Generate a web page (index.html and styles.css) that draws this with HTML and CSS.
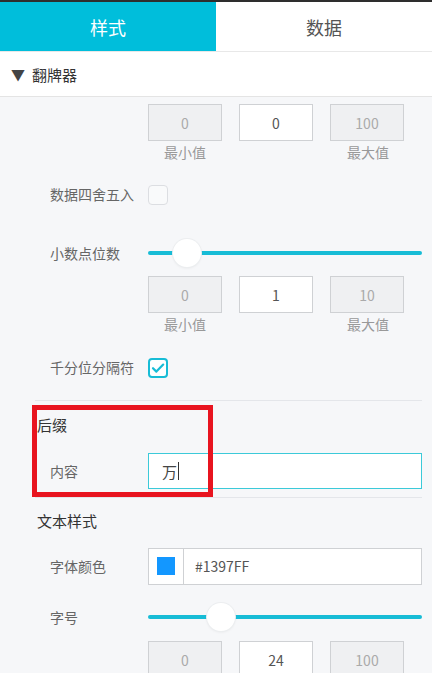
FILE: index.html
```html
<!DOCTYPE html>
<html lang="zh-CN">
<head>
    <meta charset="UTF-8">
    <meta name="viewport" content="width=device-width, initial-scale=1.0">
    <title>翻牌器 样式</title>
    <link rel="stylesheet" href="styles.css">
</head>
<body>
    <div class="tabs">
        <div class="tab active">样式</div>
        <div class="tab">数据</div>
    </div>

    <div class="section-head"><span class="arrow">▼</span> 翻牌器</div>

    <div class="panel">
        <div class="group first">
            <div class="row range">
                <div class="label"></div>
                <div class="field">
                    <div class="nums">
                        <div class="num off">0</div>
                        <div class="num">0</div>
                        <div class="num off">100</div>
                    </div>
                    <div class="num-labels"><span>最小值</span><span>最大值</span></div>
                </div>
            </div>
            <div class="row">
                <div class="label">数据四舍五入</div>
                <div class="field"><span class="check"></span></div>
            </div>
            <div class="row">
                <div class="label">小数点位数</div>
                <div class="field">
                    <div class="slider"><span class="thumb" style="--p: 0.1"></span></div>
                </div>
            </div>
            <div class="row range">
                <div class="label"></div>
                <div class="field">
                    <div class="nums">
                        <div class="num off">0</div>
                        <div class="num">1</div>
                        <div class="num off">10</div>
                    </div>
                    <div class="num-labels second"><span>最小值</span><span>最大值</span></div>
                </div>
            </div>
            <div class="row">
                <div class="label">千分位分隔符</div>
                <div class="field">
                    <span class="check on">
                        <svg viewBox="0 0 20 20" width="20" height="20"><path d="M5 10.2l3.4 3.4L15.2 6.6" fill="none" stroke="#17bcd6" stroke-width="2.2" stroke-linecap="round" stroke-linejoin="round"/></svg>
                    </span>
                </div>
            </div>
        </div>

        <div class="group suffix">
            <div class="group-title">后缀</div>
            <div class="row">
                <div class="label">内容</div>
                <div class="field">
                    <div class="text-input focus">万<span class="caret"></span></div>
                </div>
            </div>
            <div class="marker"></div>
        </div>

        <div class="group text-style">
            <div class="group-title">文本样式</div>
            <div class="row">
                <div class="label">字体颜色</div>
                <div class="field">
                    <div class="color-input">
                        <span class="swatch-box"><span class="swatch"></span></span>
                        <span class="hex">#1397FF</span>
                    </div>
                </div>
            </div>
            <div class="row">
                <div class="label">字号</div>
                <div class="field">
                    <div class="slider"><span class="thumb" style="--p: 0.24"></span></div>
                </div>
            </div>
            <div class="row range">
                <div class="label"></div>
                <div class="field">
                    <div class="nums">
                        <div class="num off">0</div>
                        <div class="num">24</div>
                        <div class="num off">100</div>
                    </div>
                </div>
            </div>
        </div>
    </div>
</body>
</html>
```

FILE: styles.css
```css
* {
    box-sizing: border-box;
}
body {
    margin: 0;
    width: 432px;
    height: 673px;
    overflow: hidden;
    background-color: #f6f7f9;
    font-family: "Noto Sans CJK SC", "Noto Sans", sans-serif;
    color: #666;
    font-size: 14px;
}
.tabs {
    display: flex;
    height: 51px;
    border-top: 2px solid #2e2e2e;
    background-color: #fff;
}
.tab {
    flex: 1;
    display: flex;
    align-items: center;
    justify-content: center;
    font-size: 18px;
    color: #555;
}
.tab.active {
    background-color: #00bedb;
    color: #fff;
}
.section-head {
    height: 46px;
    display: flex;
    align-items: center;
    padding-left: 11px;
    background-color: #fff;
    border-top: 1px solid #e8e8e8;
    border-bottom: 1px solid #e4e4e4;
    font-size: 15px;
    color: #333;
}
.arrow {
    font-size: 14px;
    color: #444;
    margin-right: 7px;
}
.panel {
    padding: 0 10px 0 35px;
}
.group {
    border-top: 1px solid #e4e6ea;
    position: relative;
}
.group.first {
    border-top: none;
    padding-top: 7px;
    padding-bottom: 13px;
}
.group-title {
    height: 46px;
    display: flex;
    align-items: center;
    padding-left: 2px;
    font-size: 15px;
    color: #333;
}
.row {
    display: flex;
    align-items: center;
    min-height: 40px;
}
.row.range {
    align-items: flex-start;
}
.label {
    width: 113px;
    padding-left: 15px;
}
.field {
    flex: 1;
}
.nums {
    display: flex;
    gap: 17px;
    width: 257px;
}
.num {
    width: 74px;
    height: 37px;
    display: flex;
    align-items: center;
    justify-content: center;
    background-color: #fff;
    border: 1px solid #cfd1d4;
    color: #555;
}
.num.off {
    background-color: #eff0f2;
    color: #aaa;
}
.num-labels {
    display: flex;
    justify-content: space-between;
    width: 257px;
    height: 22px;
    padding: 0 16px 0 16px;
    color: #999;
    line-height: 22px;
    margin-bottom: 11px;
}
.num-labels.second {
    margin-bottom: 12px;
}
.check {
    display: inline-flex;
    width: 20px;
    height: 20px;
    border: 1px solid #dcdee2;
    border-radius: 4px;
    background-color: #f9fafb;
    vertical-align: middle;
    align-items: center;
    justify-content: center;
}
.check.on {
    border: 2px solid #17bcd6;
    background-color: #fff;
}
.check.on svg {
    flex: none;
}
.first .row:nth-child(3) {
    margin-top: 19px;
    margin-bottom: 3px;
}
.slider {
    position: relative;
    height: 30px;
}
.slider::before {
    content: "";
    position: absolute;
    left: 0;
    right: 0;
    top: 13px;
    height: 4px;
    border-radius: 2px;
    background-color: #17bcd6;
}
.thumb {
    position: absolute;
    top: 1px;
    left: calc(var(--p) * (100% - 28px));
    width: 28px;
    height: 28px;
    border-radius: 50%;
    background-color: #fff;
    box-shadow: 0 0 0 1px #eceef0, 0 1px 3px rgba(0, 0, 0, 0.08);
}
.suffix {
    padding-bottom: 6px;
}
.suffix .group-title {
    height: 47px;
}
.suffix .row {
    margin-top: 3px;
}
.text-input {
    height: 36px;
    display: flex;
    align-items: center;
    padding-left: 13px;
    background-color: #fff;
    border: 1px solid #ccd;
    color: #444;
    font-size: 15px;
}
.text-input.focus {
    border-color: #3ccad9;
}
.caret {
    display: inline-block;
    width: 1px;
    height: 18px;
    margin-left: 1px;
    background-color: #333;
}
.marker {
    position: absolute;
    left: -3px;
    top: 4px;
    width: 181px;
    height: 92px;
    border: 5px solid #e8141f;
}
.color-input {
    height: 37px;
    display: flex;
    background-color: #fff;
    border: 1px solid #cfd1d4;
}
.swatch-box {
    width: 35px;
    display: flex;
    align-items: center;
    justify-content: center;
    border-right: 1px solid #cfd1d4;
}
.swatch {
    width: 18px;
    height: 18px;
    background-color: #1397ff;
}
.hex {
    display: flex;
    align-items: center;
    padding-left: 11px;
    color: #555;
}
.text-style .group-title {
    height: 45px;
}
.text-style .row:nth-child(2) {
    margin-top: 3px;
}
.text-style .row:nth-child(3) {
    margin-top: 11px;
}
.text-style .row:nth-child(4) {
    margin-top: 4px;
}
```
